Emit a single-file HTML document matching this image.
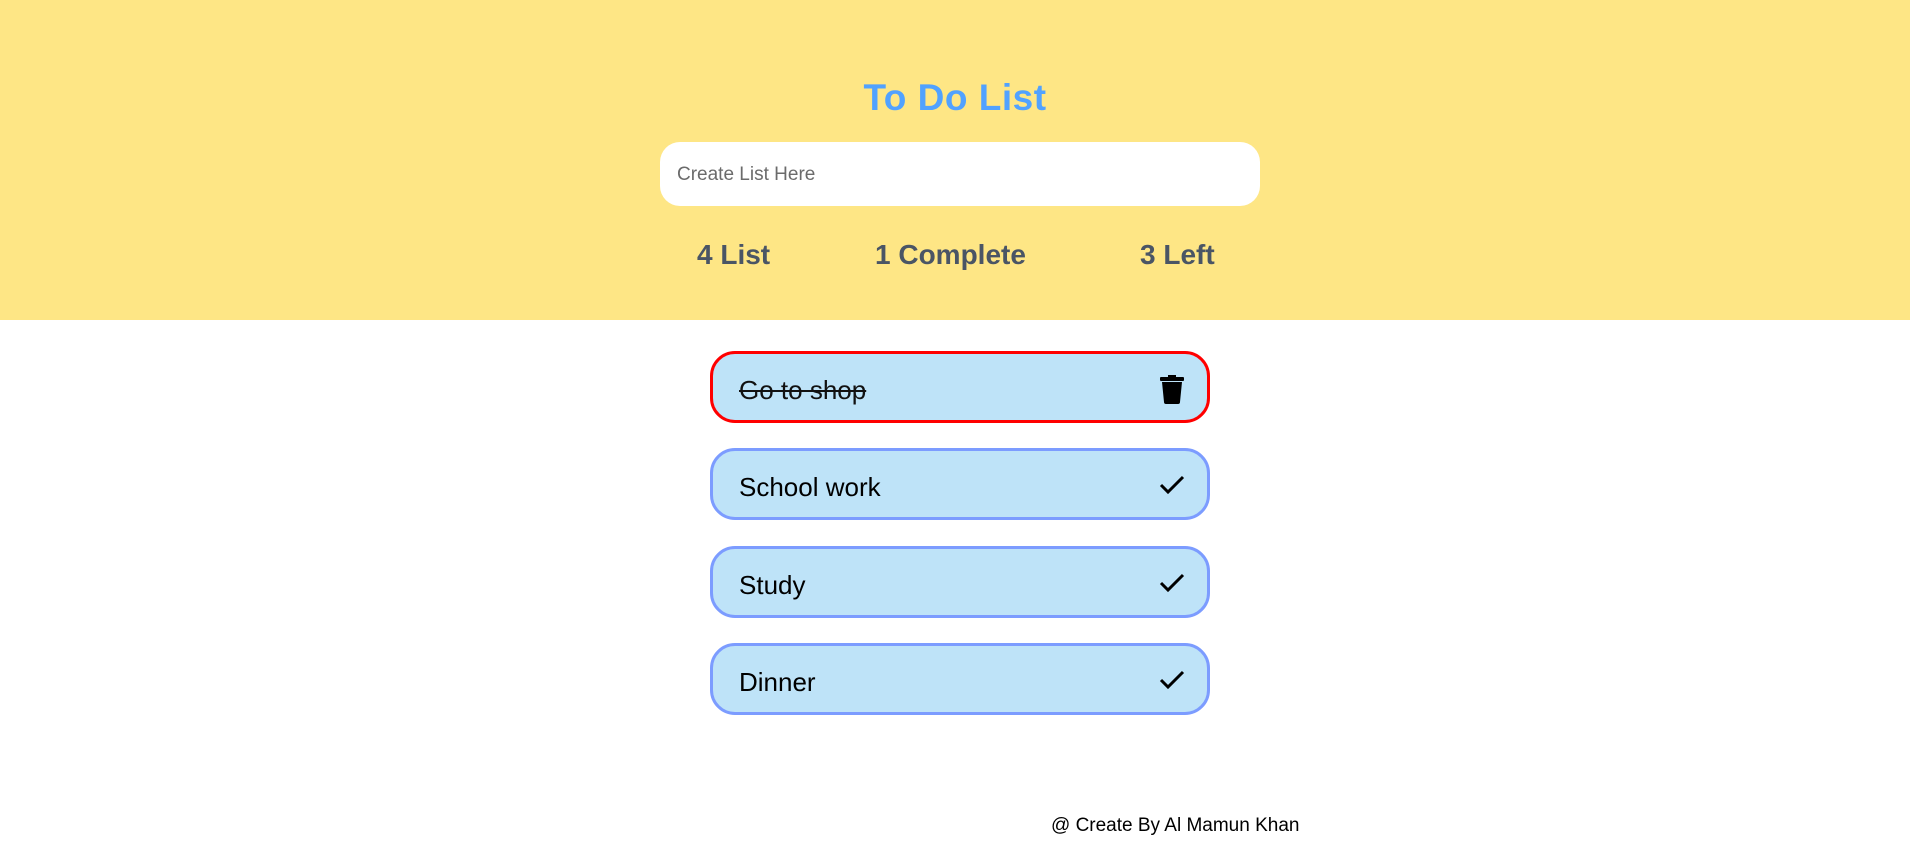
<!DOCTYPE html>
<html><head><meta charset="utf-8"><style>
*{box-sizing:border-box;margin:0;padding:0}
body{width:1910px;height:858px;background:#fff;font-family:"Liberation Sans",sans-serif;position:relative;overflow:hidden}
.top{position:absolute;left:0;top:0;width:1910px;height:320px;background:#fee685}
h1{position:absolute;left:0;width:1910px;top:77px;text-align:center;color:#51a2ff;font-size:37px;font-weight:bold;letter-spacing:0.5px}
.inp{position:absolute;left:660px;top:142px;width:600px;height:64px;background:#fff;border-radius:20px;color:#6b6b6b;font-size:19px;line-height:66px;padding-left:17px}
.st{position:absolute;top:239px;color:#4a5565;font-size:28px;font-weight:bold}
.item{position:absolute;left:710px;width:500px;height:72px;background:#bee3f8;border:3px solid #7c9cff;border-radius:25px}
.item span{position:absolute;left:26px;top:3px;line-height:66px;font-size:26px;color:#000}
.item svg{position:absolute;left:445px;top:20px}
.foot{position:absolute;left:1051px;top:815px;font-size:19px;color:#000}
</style></head><body>
<div class="top"></div>
<h1>To Do List</h1>
<div class="inp">Create List Here</div>
<div class="st" style="left:697px">4 List</div>
<div class="st" style="left:875px">1 Complete</div>
<div class="st" style="left:1140px">3 Left</div>
<div class="item" style="top:351px;border-color:#f00"><span style="text-decoration:line-through;font-weight:300;color:#111">Go to shop</span>
<svg width="28" height="30" viewBox="0 0 28 30"><rect x="2" y="3" width="24" height="4" rx="1" fill="#000"/><rect x="10" y="1" width="8" height="3" fill="#000"/><path d="M4 8h20l-2 20a2 2 0 0 1-2 2H8a2 2 0 0 1-2-2z" fill="#000"/></svg></div>
<div class="item" style="top:448px"><span>School work</span><svg width="28" height="28" viewBox="0 0 28 28"><path d="M3 14l7 7L25 6" stroke="#000" stroke-width="3" fill="none"/></svg></div>
<div class="item" style="top:546px"><span>Study</span><svg width="28" height="28" viewBox="0 0 28 28"><path d="M3 14l7 7L25 6" stroke="#000" stroke-width="3" fill="none"/></svg></div>
<div class="item" style="top:643px"><span>Dinner</span><svg width="28" height="28" viewBox="0 0 28 28"><path d="M3 14l7 7L25 6" stroke="#000" stroke-width="3" fill="none"/></svg></div>
<div class="foot">@ Create By Al Mamun Khan</div>
</body></html>
